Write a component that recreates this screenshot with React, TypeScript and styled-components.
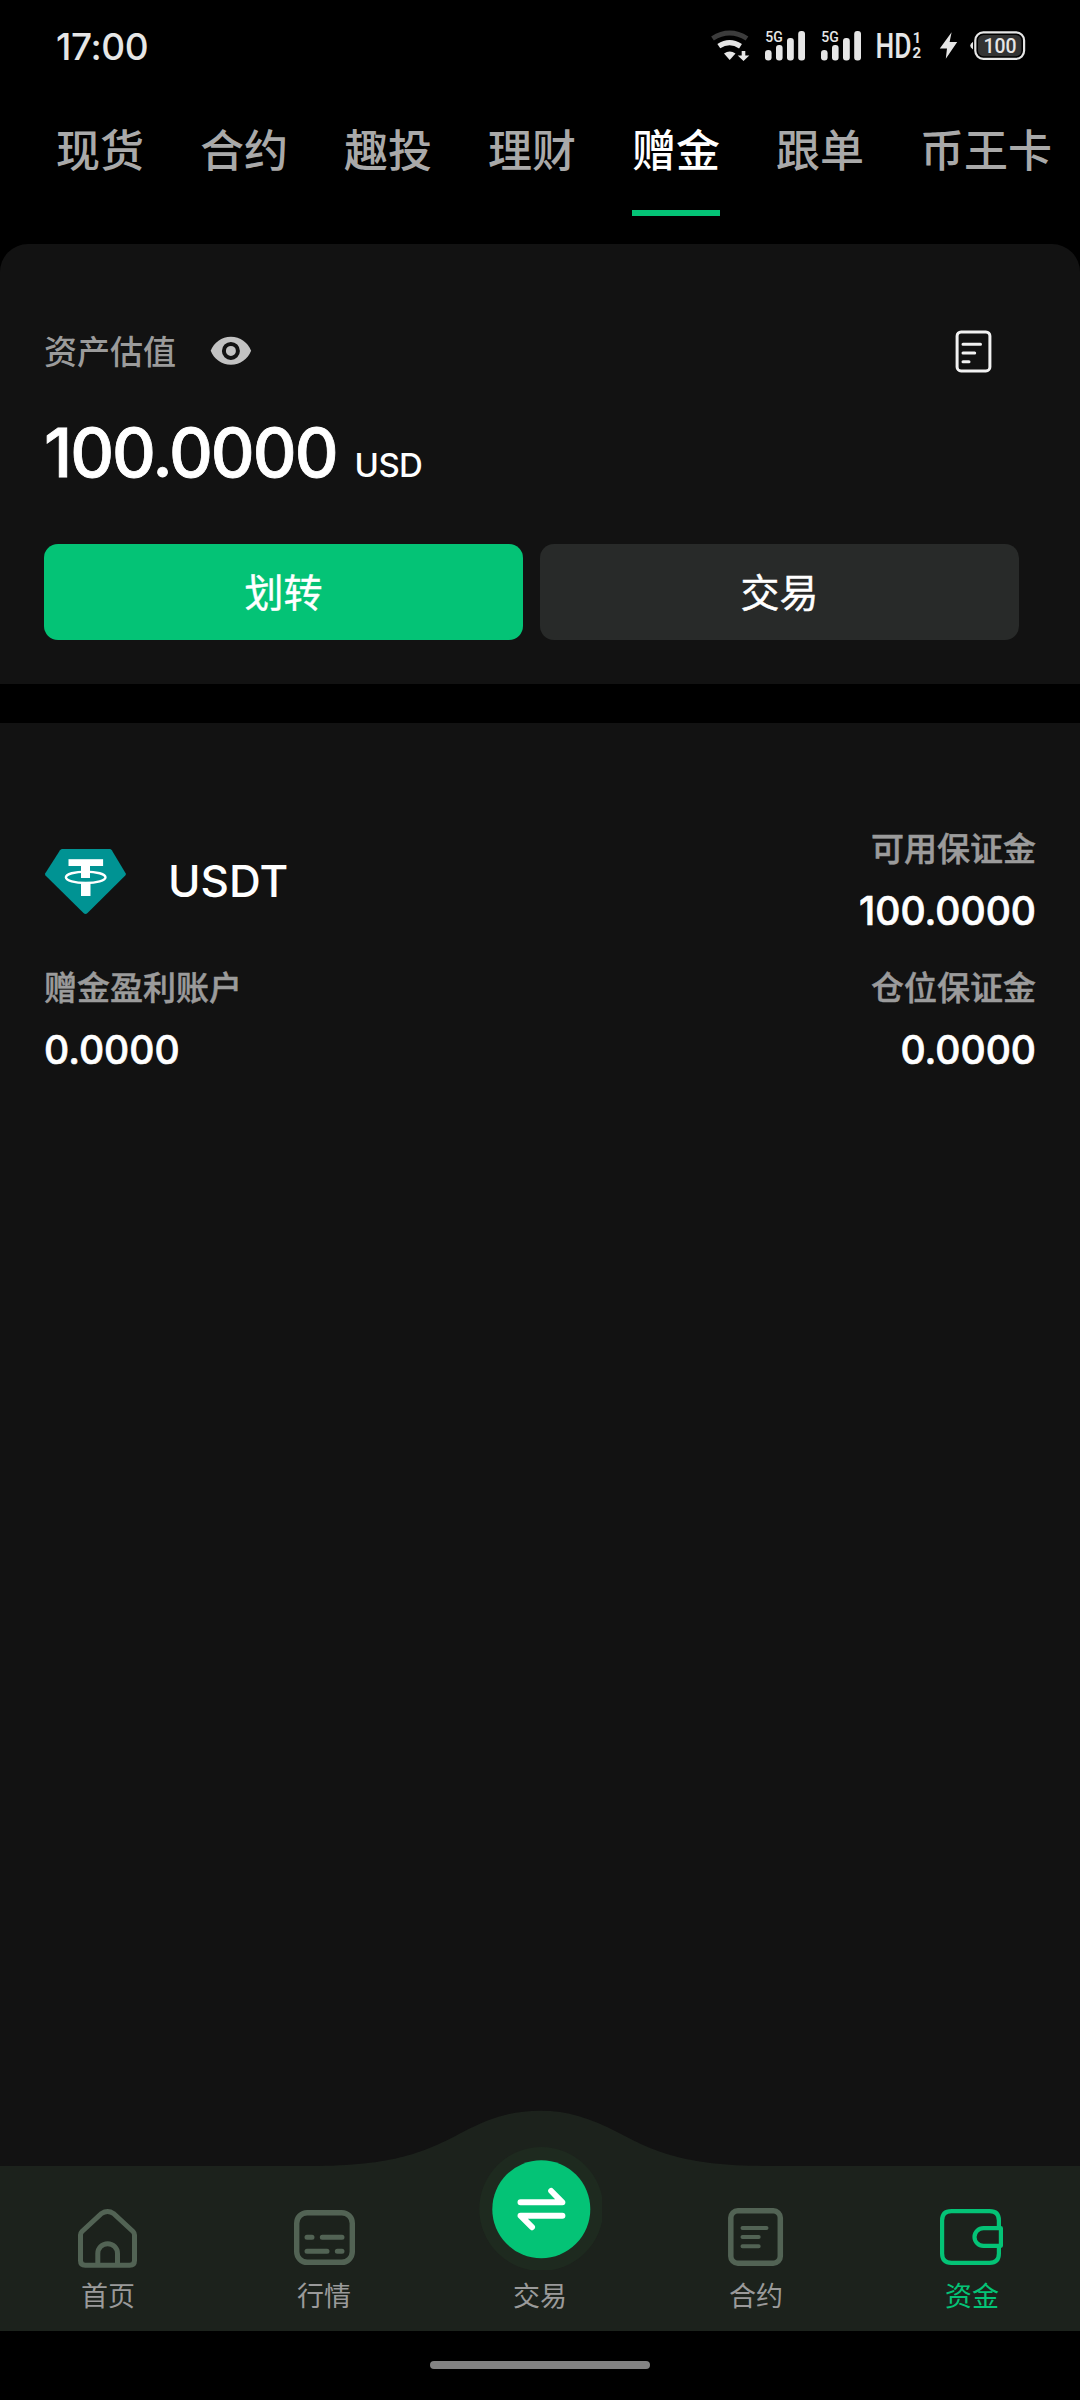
import React from 'react';
import styled, { createGlobalStyle } from 'styled-components';

const GREEN = '#04c376';
const CJK = `'Noto Sans CJK SC', sans-serif`;
const LATIN = `Inter, 'Noto Sans CJK SC', sans-serif`;

const GlobalStyle = createGlobalStyle`
  * { box-sizing: border-box; }
  html, body { margin: 0; background: #000; }
`;

const Screen = styled.div`
  width: 1080px;
  height: 2400px;
  overflow: hidden;
  display: flex;
  flex-direction: column;
  background: #000;
  color: #fff;
  font-family: ${CJK};
`;

const StatusBar = styled.header`
  height: 92px;
  flex: none;
  display: flex;
  justify-content: space-between;
  align-items: flex-start;
  padding: 27px 54px 0 56px;
`;

const Clock = styled.time`
  font: 500 37px/40px ${LATIN};
  letter-spacing: -0.4px;
  color: #e6e6e6;
`;

const StatusIcons = styled.div`
  display: flex;
  height: 38px;
`;

const Glyph = styled.svg<{ $w: number; $h: number }>`
  display: block;
  flex: none;
  width: ${(p) => p.$w}px;
  height: ${(p) => p.$h}px;
`;

const TextGlyph = styled(Glyph)`
  overflow: visible;
`;

const Tabs = styled.nav`
  height: 152px;
  flex: none;
  display: flex;
  gap: 56px;
  padding: 24px 0 0 56px;
`;

const Tab = styled.div<{ $active?: boolean }>`
  flex: none;
  height: 100px;
  font-size: 44px;
  font-weight: 500;
  line-height: 64px;
  white-space: nowrap;
  color: ${(p) => (p.$active ? '#fff' : '#a9a9a9')};
  border-bottom: 6px solid ${(p) => (p.$active ? GREEN : 'transparent')};
`;

const SummaryCard = styled.section`
  height: 440px;
  flex: none;
  padding: 80px 61px 0 44px;
  border-radius: 28px 28px 0 0;
  background: #121212;
`;

const SummaryHead = styled.div`
  display: flex;
  height: 51px;
  align-items: center;
`;

const Label = styled.div<{ $strong?: boolean }>`
  font-size: 33px;
  font-weight: 500;
  line-height: 44px;
  color: #9b9b9b;
  -webkit-text-stroke: ${(p) => (p.$strong ? '0.5px #9b9b9b' : '0')};
`;

const Spacer = styled.div`
  flex: 1;
`;

const EyeSlot = styled.div`
  margin-left: 33px;
`;

const RecordSlot = styled.div`
  margin-right: 26px;
`;

const Balance = styled.div`
  display: flex;
  align-items: baseline;
  height: 80px;
  margin-top: 37px;
  font: 500 68px/80px ${LATIN};
  letter-spacing: -2px;
  -webkit-text-stroke: 0.8px #fff;
`;

const Currency = styled.span`
  margin-left: 18px;
  font-size: 33px;
  font-weight: 500;
  letter-spacing: -0.6px;
  -webkit-text-stroke: 0;
`;

const Actions = styled.div`
  display: grid;
  grid-template-columns: 1fr 1fr;
  gap: 17px;
  margin-top: 52px;
`;

const ActionButton = styled.button<{ $primary?: boolean }>`
  height: 96px;
  padding: 0 0 4px;
  border: 0;
  border-radius: 14px;
  background: ${(p) => (p.$primary ? GREEN : '#282a29')};
  color: #fff;
  font: 400 39px/56px ${CJK};
  -webkit-text-stroke: 0.4px #fff;
`;

const Assets = styled.main`
  flex: 1;
  margin-top: 39px;
  padding: 101px 44px 0;
  display: flex;
  flex-direction: column;
  gap: 27px;
  background: #121212;
`;

const AssetRow = styled.div`
  display: flex;
  justify-content: space-between;
  align-items: center;
  height: 112px;
`;

const Token = styled.div`
  display: flex;
  align-items: center;
  gap: 38px;
  padding-top: 2px;
`;

const TokenName = styled.span`
  font: 500 44px/60px ${LATIN};
  letter-spacing: 0;
`;

const Metric = styled.div<{ $end?: boolean }>`
  display: flex;
  flex-direction: column;
  gap: 18px;
  align-items: ${(p) => (p.$end ? 'flex-end' : 'flex-start')};
`;

const MetricValue = styled.div`
  font: 500 39px/48px ${LATIN};
  -webkit-text-stroke: 0.7px #fff;
`;

const BottomNav = styled.nav`
  position: relative;
  height: 165px;
  flex: none;
  display: flex;
  padding-top: 38px;
  background: #1c221c;
`;

const Hump = styled.svg`
  position: absolute;
  left: 0;
  top: -56px;
  width: 1080px;
  height: 57px;
`;

const NavItem = styled.a<{ $active?: boolean }>`
  position: relative;
  flex: 1;
  display: flex;
  flex-direction: column;
  align-items: center;
  gap: 5px;
  font-size: 27px;
  line-height: 36px;
  color: ${(p) => (p.$active ? GREEN : '#9a9a9a')};
`;

const TradeSlot = styled.div`
  margin: -58px 0 2px;
`;

const GestureArea = styled.footer`
  height: 69px;
  flex: none;
  display: flex;
  justify-content: center;
  padding-top: 30px;
`;

const GestureBar = styled.div`
  width: 220px;
  height: 8px;
  border-radius: 4px;
  background: #838383;
`;

const WifiIcon = () => (
  <Glyph $w={54} $h={38} viewBox="710 27 54 38" fill="none">
    <path d="M712.5 38.5Q729.5 27.5 747 38.5" stroke="#3c3c3c" strokeWidth="5" />
    <path d="M718.8 46.2Q729.5 39 740.5 46.2" stroke="#e6e6e6" strokeWidth="5.2" />
    <path d="M724 53.5Q729.7 49.5 735.5 53.5L729.7 60Z" fill="#e6e6e6" />
    <path d="M741.7 51h3.6v4.6h4l-5.8 5.4-5.8-5.4h4z" fill="#e6e6e6" />
  </Glyph>
);

const SignalIcon = ({ width = 56 }: { width?: number }) => (
  <Glyph $w={width} $h={38} viewBox={`764 27 ${width} 38`} fill="#e6e6e6">
    <text
      x="765.2"
      y="42"
      fontFamily="Roboto, sans-serif"
      fontWeight="500"
      fontSize="15"
      textLength="17.5"
      lengthAdjust="spacingAndGlyphs"
    >
      5G
    </text>
    <rect x="765" y="50" width="6.6" height="10.4" rx="3.2" />
    <rect x="776" y="45" width="6.6" height="15.4" rx="3" />
    <rect x="787" y="38" width="6.8" height="22.4" rx="3" />
    <rect x="798.2" y="31" width="6.8" height="29.4" rx="3" />
  </Glyph>
);

const HdIcon = () => (
  <TextGlyph $w={67} $h={38} viewBox="872 27 67 38" fill="#e6e6e6">
    <text
      x="875.5"
      y="58"
      fontFamily="Roboto, sans-serif"
      fontWeight="500"
      fontSize="35.4"
      textLength="36"
      lengthAdjust="spacingAndGlyphs"
    >
      HD
    </text>
    <text x="912.8" y="42.6" fontFamily="Roboto, sans-serif" fontWeight="700" fontSize="14.5">
      1
    </text>
    <text x="912.6" y="58.4" fontFamily="Roboto, sans-serif" fontWeight="700" fontSize="15">
      2
    </text>
  </TextGlyph>
);

const BoltIcon = () => (
  <Glyph $w={30} $h={38} viewBox="939 27 30 38" fill="#e6e6e6">
    <path d="M951.6 32.3L939.8 48.6h7.2l-1.2 10.2L957.2 42h-7.6z" />
  </Glyph>
);

const BatteryIcon = () => (
  <Glyph $w={57} $h={38} viewBox="969 27 57 38">
    <path d="M973 41.8q-5.6 4 0 7.6z" fill="#e6e6e6" />
    <rect x="975.3" y="32.4" width="48.8" height="26.4" rx="8" fill="none" stroke="#e6e6e6" strokeWidth="2.2" />
    <rect x="978" y="35" width="43.4" height="21.2" rx="5.5" fill="#333" />
    <text
      x="983.4"
      y="53"
      fill="#e6e6e6"
      fontFamily="Roboto, sans-serif"
      fontWeight="500"
      fontSize="21"
      textLength="33"
      lengthAdjust="spacingAndGlyphs"
    >
      100
    </text>
  </Glyph>
);

const EyeIcon = () => (
  <Glyph $w={44} $h={51} viewBox="209 324 44 51">
    <path
      d="M210.7 350.7C214 342.5 221.5 336.7 230.9 336.7S247.8 342.5 251.1 350.7C247.8 359 240.3 364.7 230.9 364.7S214 359 210.7 350.7Z"
      fill="#c2c2c2"
    />
    <circle cx="230.9" cy="350.9" r="7" fill="#c2c2c2" stroke="#121212" strokeWidth="4" />
  </Glyph>
);

const RecordIcon = () => (
  <Glyph $w={40} $h={51} viewBox="953 324 40 51" fill="none" stroke="#f2f2f2" strokeLinecap="round">
    <rect x="957.1" y="331.9" width="32.8" height="39" rx="4" strokeWidth="3" />
    <path d="M963 344.3H980.5M963 353H974.7M963 361.8H969" strokeWidth="3" />
  </Glyph>
);

const TetherIcon = () => (
  <Glyph $w={86} $h={70} viewBox="44 846 86 70">
    <path
      d="M62.5 849H109.5Q111 849 111.8 850.3L125.6 873.2Q126.3 874.5 125.3 875.6L87.5 913Q85.5 914.8 83.5 913L45.5 875.6Q44.7 874.5 45.3 873.2L60 850.3Q61 849 62.5 849Z"
      fill="#009393"
    />
    <g fill="#fff">
      <rect x="68.5" y="859.2" width="34.6" height="6.8" />
      <rect x="81" y="864" width="9" height="14" />
      <rect x="81" y="882" width="9.5" height="14" />
    </g>
    <ellipse cx="85.7" cy="877.3" rx="19.8" ry="5.7" fill="none" stroke="#fff" strokeWidth="2.4" />
  </Glyph>
);

const HomeIcon = () => (
  <Glyph $w={68} $h={68} viewBox="74 2204 68 68" fill="none" stroke="#526354" strokeWidth="5">
    <path d="M80.5 2235Q80.5 2233 82 2231.5L101.5 2213.5Q107.6 2209.5 113.5 2213.5L133 2231.5Q134.5 2233 134.5 2235V2260.5Q134.5 2265.3 129.7 2265.3H85.3Q80.5 2265.3 80.5 2260.5Z" />
    <path d="M97.8 2265V2253.5A9.85 9.85 0 0 1 117.5 2253.5V2265" />
  </Glyph>
);

const MarketIcon = () => (
  <Glyph $w={68} $h={68} viewBox="290 2204 68 68" fill="none" stroke="#526354" strokeWidth="5" strokeLinecap="round">
    <rect x="296.7" y="2212.7" width="55.6" height="49.6" rx="10.5" strokeWidth="5.4" />
    <path d="M307 2237.3H312M322.3 2237.3H342M307 2251.3H327M337.3 2251.3H342" />
  </Glyph>
);

const TradeIcon = () => (
  <Glyph $w={124} $h={124} viewBox="478 2146 124 124">
    <circle cx="541.3" cy="2209" r="62" fill="#1e2a1f" />
    <circle cx="541.3" cy="2209.2" r="49" fill={GREEN} />
    <path
      d="M520.5 2202.3H562.4L551.2 2191M562.4 2215.7H520.5L532 2227.2"
      fill="none"
      stroke="#fff"
      strokeWidth="6"
      strokeLinecap="round"
      strokeLinejoin="round"
    />
  </Glyph>
);

const ContractIcon = () => (
  <Glyph $w={68} $h={68} viewBox="722 2204 68 68" fill="none" stroke="#526354" strokeLinecap="round">
    <rect x="730.8" y="2210.8" width="49.5" height="52.4" rx="7" strokeWidth="5.5" />
    <path d="M742.5 2228H766.5M742.5 2237H758.7M742.5 2246.2H758.7" strokeWidth="4" />
  </Glyph>
);

const WalletIcon = () => (
  <Glyph $w={68} $h={68} viewBox="938 2204 68 68" fill="none" stroke={GREEN} strokeWidth="4.2">
    <path d="M998.9 2228V2220.5Q998.9 2211.2 989.6 2211.2H951.4Q942.1 2211.2 942.1 2220.5V2253.5Q942.1 2262.8 951.4 2262.8H989.6Q998.9 2262.8 998.9 2253.5V2246" />
    <path d="M1000.9 2228.2H983.5A9 8.8 0 0 0 983.5 2245.8H1000.9Z" strokeLinejoin="round" />
  </Glyph>
);

const TABS = ['现货', '合约', '趣投', '理财', '赠金', '跟单', '币王卡'];

export default function App() {
  return (
    <Screen>
      <GlobalStyle />
      <StatusBar>
        <Clock>17:00</Clock>
        <StatusIcons>
          <WifiIcon />
          <SignalIcon />
          <SignalIcon width={52} />
          <HdIcon />
          <BoltIcon />
          <BatteryIcon />
        </StatusIcons>
      </StatusBar>

      <Tabs>
        {TABS.map((t) => (
          <Tab key={t} $active={t === '赠金'}>
            {t}
          </Tab>
        ))}
      </Tabs>

      <SummaryCard>
        <SummaryHead>
          <Label>资产估值</Label>
          <EyeSlot>
            <EyeIcon />
          </EyeSlot>
          <Spacer />
          <RecordSlot>
            <RecordIcon />
          </RecordSlot>
        </SummaryHead>
        <Balance>
          100.0000<Currency>USD</Currency>
        </Balance>
        <Actions>
          <ActionButton $primary>划转</ActionButton>
          <ActionButton>交易</ActionButton>
        </Actions>
      </SummaryCard>

      <Assets>
        <AssetRow>
          <Token>
            <TetherIcon />
            <TokenName>USDT</TokenName>
          </Token>
          <Metric $end>
            <Label $strong>可用保证金</Label>
            <MetricValue>100.0000</MetricValue>
          </Metric>
        </AssetRow>
        <AssetRow>
          <Metric>
            <Label $strong>赠金盈利账户</Label>
            <MetricValue>0.0000</MetricValue>
          </Metric>
          <Metric $end>
            <Label $strong>仓位保证金</Label>
            <MetricValue>0.0000</MetricValue>
          </Metric>
        </AssetRow>
      </Assets>

      <BottomNav>
        <Hump viewBox="0 2110 1080 57">
          <path
            d="M310 2167V2166C395 2166 425 2152 463 2132C490 2118 512 2110.7 540 2110.7S590 2118 617 2132C655 2152 685 2166 770 2166V2167Z"
            fill="#1c221c"
          />
        </Hump>
        <NavItem>
          <HomeIcon />
          首页
        </NavItem>
        <NavItem>
          <MarketIcon />
          行情
        </NavItem>
        <NavItem>
          <TradeSlot>
            <TradeIcon />
          </TradeSlot>
          交易
        </NavItem>
        <NavItem>
          <ContractIcon />
          合约
        </NavItem>
        <NavItem $active>
          <WalletIcon />
          资金
        </NavItem>
      </BottomNav>

      <GestureArea>
        <GestureBar />
      </GestureArea>
    </Screen>
  );
}
